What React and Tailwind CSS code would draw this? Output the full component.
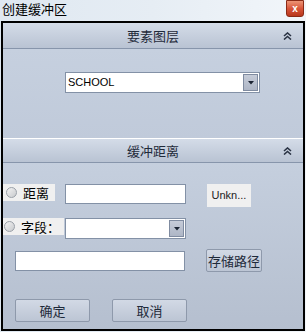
import { useState } from 'react'

const cjk = { fontFamily: '"Noto Sans CJK SC", "Microsoft YaHei", sans-serif' }
const latin = { fontFamily: '"Liberation Sans", Arial, sans-serif' }

const Chevrons = () => (
  <svg width="9" height="8" viewBox="0 0 9 8" className="text-[#2a3344]">
    <path d="M1 4 L4.5 1 L8 4" fill="none" stroke="currentColor" strokeWidth="1.6" />
    <path d="M1 7.5 L4.5 4.5 L8 7.5" fill="none" stroke="currentColor" strokeWidth="1.6" />
  </svg>
)

const Arrow = () => (
  <svg width="6" height="4" viewBox="0 0 6 4">
    <path d="M0 0 H6 L3 3.5 Z" fill="#1b2433" />
  </svg>
)

const Header = ({ title, h }) => (
  <div
    className={`${h} relative flex items-center justify-center border-b border-[#8795ab] bg-gradient-to-b from-[#d4dce8] to-[#b9c3d3]`}
  >
    <span className="text-[13px] text-[#1f2a3a]" style={cjk}>{title}</span>
    <span className="absolute right-[11px] top-1/2 -translate-y-1/2 flex"><Chevrons /></span>
  </div>
)

const Radio = () => (
  <span className="w-[11px] h-[11px] rounded-full border border-[#9aa0a8] bg-gradient-to-br from-[#f4f4f4] to-[#c8cacd] inline-block" />
)

const Combo = ({ value, w }) => (
  <div className={`${w} h-[21px] flex items-center bg-white border border-[#8391a6]`}>
    <span className="flex-1 pl-[2px] text-[11px] text-black" style={latin}>{value}</span>
    <div className="w-[15px] h-[17px] mr-[1px] flex items-center justify-center border border-[#7f8ba0] bg-gradient-to-b from-[#c6ccd8] to-[#aeb6c6]">
      <Arrow />
    </div>
  </div>
)

const Btn = ({ children, w }) => (
  <button
    className={`${w} h-[23px] rounded-[2px] border border-[#8e99ab] bg-gradient-to-b from-[#d2d9e5] to-[#bcc5d4] text-[13px] text-[#1f2a3a]`}
    style={cjk}
  >
    {children}
  </button>
)

export default function App() {
  const [path, setPath] = useState('')

  return (
    <div className="w-[306px] h-[332px] overflow-hidden flex flex-col bg-gradient-to-r from-[#dfe8f1] via-[#e6edf4] to-[#f2f6fa]">
      {/* title bar */}
      <div className="h-[21px] flex items-start justify-between pl-[2px]">
        <span className="text-[13px] leading-[18px] text-black" style={cjk}>创建缓冲区</span>
        <div className="w-[18px] h-[17px] mr-[2px] flex items-center justify-center rounded-b-[3px] border border-[#8a2a16] bg-gradient-to-b from-[#ec9476] via-[#d8553a] to-[#b8371c]">
          <span className="text-white text-[10px] font-bold leading-none" style={latin}>x</span>
        </div>
      </div>

      {/* window */}
      <div className="flex-1 mx-[1px] mb-[1px] border-2 border-black flex flex-col bg-[#c3cddc]">
        <Header title="要素图层" h="h-[26px]" />
        <div className="h-[90px] pt-[23px] pl-[62px] border-b border-white bg-gradient-to-b from-[#c6d0df] to-[#c0cada]">
          <Combo value="SCHOOL" w="w-[195px]" />
        </div>
        <Header title="缓冲距离" h="h-[24px]" />

        <div className="flex-1 flex flex-col bg-gradient-to-b from-[#c5cfde] to-[#b5bfcf]">
          {/* distance row */}
          <div className="flex items-start mt-[21px]">
            <div className="w-[52px] h-[17px] flex items-center gap-[6px] pl-[3px] bg-[#f0f0f0]">
              <Radio />
              <span className="text-[13px] leading-none text-black" style={cjk}>距离</span>
            </div>
            <input className="ml-[10px] w-[121px] h-[20px] bg-white border border-[#8391a6] outline-none" />
            <div
              className="ml-[21px] w-[44px] h-[23px] flex items-center justify-center bg-[#f0f0f0] text-[11px] text-[#222]"
              style={latin}
            >
              Unkn...
            </div>
          </div>

          {/* field row */}
          <div className="flex items-start mt-[11px]">
            <div className="w-[61px] h-[17px] flex items-center gap-[6px] pl-[1px] bg-[#f0f0f0]">
              <Radio />
              <span className="text-[13px] leading-none text-black" style={cjk}>字段：</span>
            </div>
            <div className="ml-[1px]">
              <Combo value="" w="w-[121px]" />
            </div>
          </div>

          {/* path row */}
          <div className="flex items-start mt-[9px]">
            <input
              value={path}
              onChange={(e) => setPath(e.target.value)}
              className="ml-[12px] mt-[3px] w-[170px] h-[20px] bg-white border border-[#8391a6] outline-none"
            />
            <div className="ml-[21px]">
              <Btn w="w-[56px]">存储路径</Btn>
            </div>
          </div>

          {/* buttons */}
          <div className="flex mt-[27px] ml-[12px] gap-[22px]">
            <Btn w="w-[75px]">确定</Btn>
            <Btn w="w-[75px]">取消</Btn>
          </div>
        </div>
      </div>
    </div>
  )
}
